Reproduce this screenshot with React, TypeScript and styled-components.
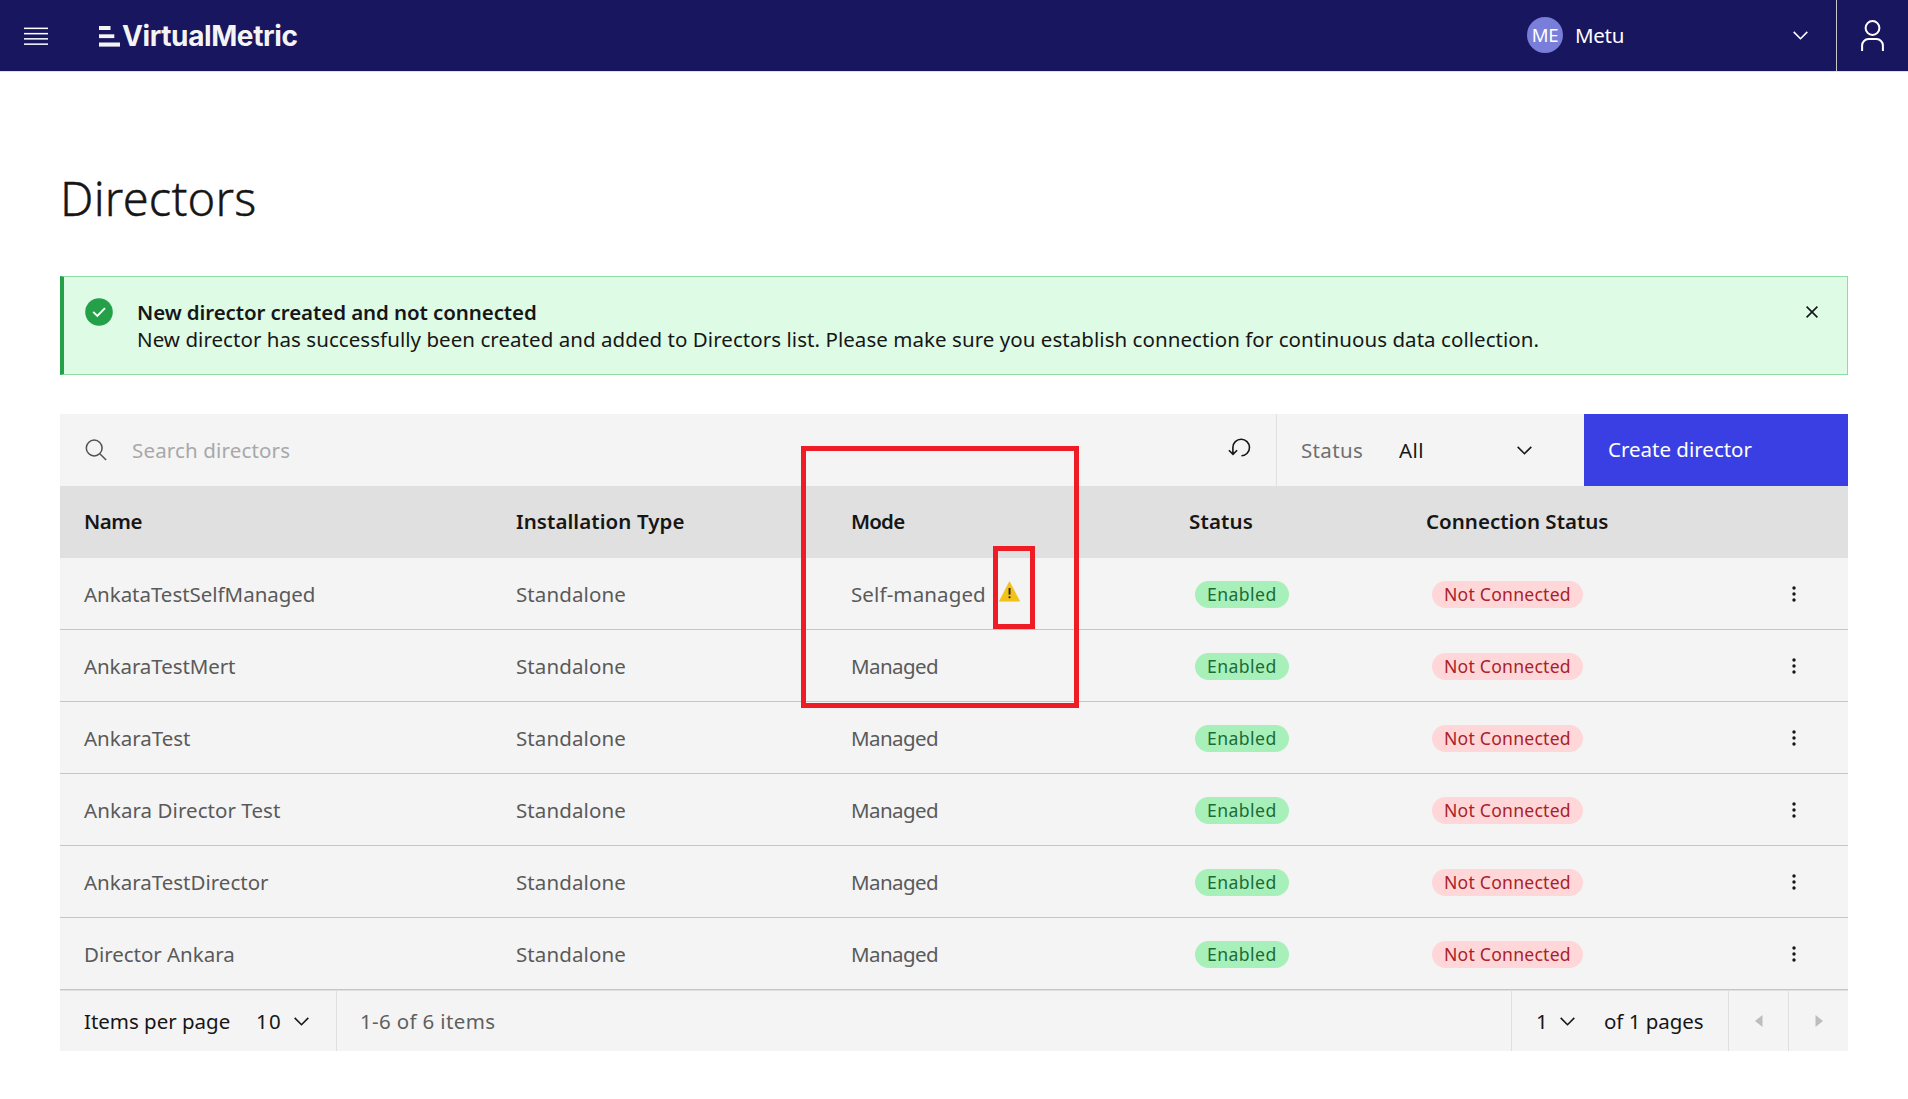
import React from "react";
import styled, { createGlobalStyle } from "styled-components";

const GlobalStyle = createGlobalStyle`
  *, *::before, *::after { box-sizing: border-box; }
  body {
    margin: 0;
    background: #ffffff;
    color: #161616;
    font-family: "Noto Sans", "Open Sans", sans-serif;
    font-size: 20.5px;
    line-height: 27px;
    overflow: hidden;
  }
  svg { display: block; flex: none; }
`;

const Page = styled.div`
  position: relative;
  width: 1908px;
  height: 1099px;
`;

const Text = styled.span<{ $ls?: number }>`
  letter-spacing: ${(p) => p.$ls ?? 0}px;
  white-space: nowrap;
`;

/* ---------- Top bar ---------- */

const TopBar = styled.header`
  display: flex;
  align-items: stretch;
  height: 72px;
  background: #191660;
  border-bottom: 1px solid #e0e0e0;
  color: #ffffff;
`;

const MenuButton = styled.div`
  display: flex;
  align-items: center;
  padding: 2px 51px 0 24px;
`;

const Logo = styled.div`
  display: flex;
  align-items: center;
  flex: 1;
  gap: 2px;
  padding-top: 1px;
  color: #f4f4f4;
  font-family: Inter, sans-serif;
  font-size: 28px;
  font-weight: 700;
  line-height: 34px;
`;

const Tenant = styled.div`
  display: flex;
  align-items: center;
  width: 309px;
  padding-right: 28px;
`;

const Avatar = styled.span`
  display: flex;
  align-items: center;
  justify-content: center;
  width: 36px;
  height: 36px;
  margin: 0 12px 1px 0;
  padding-bottom: 2px;
  border-radius: 50%;
  background: #7a7edb;
  font-size: 18.5px;
`;

const TenantName = styled.span`
  flex: 1;
  letter-spacing: -0.28px;
`;

const UserButton = styled.div`
  display: flex;
  align-items: center;
  width: 72px;
  padding-left: 24px;
  border-left: 1px solid #c6c6c6;
`;

/* ---------- Content ---------- */

const Content = styled.main`
  padding: 96px 60px 0;
`;

const Title = styled.h1`
  margin: 0 0 48px;
  font-size: 47px;
  font-weight: 300;
  line-height: 60px;
  letter-spacing: 0.23px;
  -webkit-text-stroke: 0.4px currentColor;
`;

const Banner = styled.section`
  display: flex;
  align-items: flex-start;
  height: 99px;
  margin-bottom: 39px;
  padding: 21px 29px 0 21px;
  border: 1px solid #8fdca5;
  border-left: 4px solid #24a148;
  background: #defbe6;
`;

const BannerBody = styled.div`
  display: flex;
  flex: 1;
  flex-direction: column;
  padding: 1px 0 0 24px;
`;

const BannerTitle = styled(Text)`
  font-weight: 600;
`;

const CloseButton = styled.div`
  padding-top: 8px;
`;

const Toolbar = styled.div`
  display: flex;
  height: 72px;
  background: #f4f4f4;
`;

const Search = styled.div`
  display: flex;
  flex: 1;
  align-items: center;
  padding-left: 25px;
  color: #a8a8a8;
`;

const SearchText = styled(Text)`
  flex: 1;
  padding-left: 25px;
`;

const RefreshButton = styled.div`
  padding: 0 25px 4px 0;
`;

const Filter = styled.div`
  display: flex;
  align-items: center;
  width: 308px;
  padding: 0 52px 0 24px;
  border-left: 1px solid #e0e0e0;
`;

const FilterLabel = styled(Text)`
  width: 98px;
  color: #6f6f6f;
`;

const FilterValue = styled(Text)`
  flex: 1;
`;

const CreateButton = styled.div`
  display: flex;
  align-items: center;
  width: 264px;
  padding: 0 24px 2px 24px;
  background: #393fe3;
  color: #ffffff;
`;

/* ---------- Table ---------- */

const Row = styled.div<{ $head?: boolean }>`
  display: grid;
  grid-template-columns: 432px 335px 338px 237px 1fr 94px;
  align-items: center;
  height: 72px;
  background: ${(p) => (p.$head ? "#e0e0e0" : "#f4f4f4")};
  border-bottom: ${(p) => (p.$head ? "0" : "1px solid #c6c6c6")};
  color: ${(p) => (p.$head ? "#161616" : "#5a5a5a")};
  font-weight: ${(p) => (p.$head ? 600 : 400)};
  padding: ${(p) => (p.$head ? "0 0 2px" : "1px 0 0")};
`;

const Cell = styled.div`
  display: flex;
  align-items: center;
  padding-left: 24px;
`;

const WarningMark = styled.span`
  padding: 0 0 5px 13px;
`;

const Tag = styled.span<{ $tone: "green" | "red" }>`
  height: 27px;
  margin-left: 6px;
  padding: 0 12px;
  border-radius: 14px;
  background: ${(p) => (p.$tone === "green" ? "#a7f0ba" : "#ffd7d9")};
  color: ${(p) => (p.$tone === "green" ? "#1b6b35" : "#a92229")};
  font-size: 17.6px;
  line-height: 26px;
  letter-spacing: ${(p) => (p.$tone === "green" ? 0.43 : 0.23)}px;
  white-space: nowrap;
`;

const RowMenu = styled.div`
  padding-left: 36px;
`;

/* ---------- Pagination ---------- */

const Pagination = styled.footer`
  display: flex;
  height: 61px;
  border-top: 1px solid #e0e0e0;
  background: #f4f4f4;
`;

const PageSize = styled.div`
  display: flex;
  align-items: center;
  width: 277px;
  padding-left: 24px;
  border-right: 1px solid #e0e0e0;
`;

const SizeLabel = styled(Text)`
  width: 172px;
`;

const SizeValue = styled(Text)`
  width: 38px;
`;

const Range = styled.div`
  display: flex;
  flex: 1;
  align-items: center;
  padding-left: 23px;
  color: #5f5f5f;
`;

const PageSelect = styled.div`
  display: flex;
  align-items: center;
  width: 217px;
  padding-left: 24px;
  border-left: 1px solid #e0e0e0;
`;

const PageValue = styled(Text)`
  width: 24px;
`;

const PageCount = styled(Text)`
  padding-left: 29px;
`;

const PageArrow = styled.div`
  display: flex;
  align-items: center;
  justify-content: center;
  width: 60px;
  border-left: 1px solid #e0e0e0;
`;

/* ---------- Highlight frames laid over the table ---------- */

const Frame = styled.div<{ $x: number; $y: number; $w: number; $h: number }>`
  position: absolute;
  left: ${(p) => p.$x}px;
  top: ${(p) => p.$y}px;
  width: ${(p) => p.$w}px;
  height: ${(p) => p.$h}px;
  border: 5px solid #ee1c24;
`;

const Chevron = () => (
  <svg width="15" height="9" viewBox="0 0 15 9" fill="none" stroke="currentColor" strokeWidth="1.6">
    <path d="M0.7 0.9 7.5 7.7 14.3 0.9" />
  </svg>
);

const rows = [
  { name: "AnkataTestSelfManaged", ls: -0.03, self: true },
  { name: "AnkaraTestMert", ls: -0.08 },
  { name: "AnkaraTest", ls: 0 },
  { name: "Ankara Director Test", ls: 0.06 },
  { name: "AnkaraTestDirector", ls: 0 },
  { name: "Director Ankara", ls: -0.03 },
];

export default function App() {
  return (
    <Page>
      <GlobalStyle />
      <TopBar>
        <MenuButton>
          <svg width="24" height="20" viewBox="0 0 24 20" fill="#ffffff">
            <rect y="0.6" width="24" height="1.5" />
            <rect y="5.9" width="24" height="1.5" />
            <rect y="11.1" width="24" height="1.5" />
            <rect y="16.4" width="24" height="1.5" />
          </svg>
        </MenuButton>
        <Logo>
          <svg width="21" height="21" viewBox="0 0 21 21" fill="#f4f4f4">
            <rect y="0" width="11.5" height="4" />
            <rect y="8.3" width="15.3" height="3.8" />
            <rect y="16.5" width="21" height="4.1" />
          </svg>
          <Text $ls={-0.4}>VirtualMetric</Text>
        </Logo>
        <Tenant>
          <Avatar>
            <Text $ls={-0.4}>ME</Text>
          </Avatar>
          <TenantName>Metu</TenantName>
          <Chevron />
        </Tenant>
        <UserButton>
          <svg width="23" height="32" viewBox="0 0 23 32" fill="none" stroke="#ffffff" strokeWidth="2">
            <circle cx="11.5" cy="8" r="6.9" />
            <path d="M1.1 31v-5.5a6.4 6.4 0 0 1 6.4-6.4h8a6.4 6.4 0 0 1 6.4 6.4V31" />
          </svg>
        </UserButton>
      </TopBar>

      <Content>
        <Title>Directors</Title>

        <Banner>
          <svg width="28" height="28" viewBox="0 0 28 28">
            <circle cx="14" cy="14" r="13.8" fill="#24a148" />
            <path d="M8.2 13.8 12.3 17.9 20 10.1" fill="none" stroke="#ffffff" strokeWidth="1.9" />
          </svg>
          <BannerBody>
            <BannerTitle $ls={-0.09}>New director created and not connected</BannerTitle>
            <Text $ls={0.052}>
              New director has successfully been created and added to Directors list. Please make sure you establish
              connection for continuous data collection.
            </Text>
          </BannerBody>
          <CloseButton>
            <svg width="12" height="12" viewBox="0 0 12 12" fill="none" stroke="#161616" strokeWidth="1.6">
              <path d="M0.6 0.6 11.4 11.4M11.4 0.6 0.6 11.4" />
            </svg>
          </CloseButton>
        </Banner>

        <Toolbar>
          <Search>
            <svg width="22" height="22" viewBox="0 0 22 22" fill="none" stroke="#525252" strokeWidth="1.5">
              <circle cx="9.2" cy="9" r="7.9" />
              <path d="M14.8 14.7 21.1 21" />
            </svg>
            <SearchText $ls={0.16}>Search directors</SearchText>
            <RefreshButton>
              <svg width="23" height="20" viewBox="0 0 23 20" fill="none" stroke="#161616" strokeWidth="1.6">
                <path d="M13.4 17.8a8.3 8.3 0 1 0-8.5-8.3v6.6M0.9 12.3 5 16.3 9.1 12.3" />
              </svg>
            </RefreshButton>
          </Search>
          <Filter>
            <FilterLabel $ls={0.36}>Status</FilterLabel>
            <FilterValue $ls={0.4}>All</FilterValue>
            <Chevron />
          </Filter>
          <CreateButton>
            <Text>Create director</Text>
          </CreateButton>
        </Toolbar>

        <Row $head>
          <Cell><Text $ls={-0.5}>Name</Text></Cell>
          <Cell><Text $ls={0.08}>Installation Type</Text></Cell>
          <Cell><Text $ls={-0.8}>Mode</Text></Cell>
          <Cell><Text $ls={0.14}>Status</Text></Cell>
          <Cell><Text>Connection Status</Text></Cell>
        </Row>
        {rows.map((row) => (
          <Row key={row.name}>
            <Cell><Text $ls={row.ls}>{row.name}</Text></Cell>
            <Cell><Text $ls={0.1}>Standalone</Text></Cell>
            <Cell>
              <Text $ls={row.self ? 0.12 : -0.58}>{row.self ? "Self-managed" : "Managed"}</Text>
              {row.self && (
                <WarningMark>
                  <svg width="21" height="21" viewBox="0 0 21 21">
                    <path d="M10.5 0.6 20.7 20.2H0.3Z" fill="#f1c21b" stroke="#f1c21b" strokeWidth="0.6" strokeLinejoin="round" />
                    <rect x="9.6" y="7" width="1.9" height="6.6" fill="#2b2508" />
                    <rect x="9.5" y="15.2" width="2.1" height="2" rx="0.9" fill="#2b2508" />
                  </svg>
                </WarningMark>
              )}
            </Cell>
            <Cell><Tag $tone="green">Enabled</Tag></Cell>
            <Cell><Tag $tone="red">Not Connected</Tag></Cell>
            <RowMenu>
              <svg width="8" height="18" viewBox="0 0 8 18" fill="#161616">
                <circle cx="4" cy="3" r="1.7" />
                <circle cx="4" cy="9" r="1.7" />
                <circle cx="4" cy="15" r="1.7" />
              </svg>
            </RowMenu>
          </Row>
        ))}

        <Pagination>
          <PageSize>
            <SizeLabel $ls={-0.02}>Items per page</SizeLabel>
            <SizeValue $ls={1.3}>10</SizeValue>
            <Chevron />
          </PageSize>
          <Range>
            <Text $ls={0.35}>1-6 of 6 items</Text>
          </Range>
          <PageSelect>
            <PageValue>1</PageValue>
            <Chevron />
            <PageCount $ls={-0.04}>of 1 pages</PageCount>
          </PageSelect>
          <PageArrow>
            <svg width="8" height="12" viewBox="0 0 8 12" fill="#bdbdbd"><path d="M7.5 0V12L0 6Z" /></svg>
          </PageArrow>
          <PageArrow>
            <svg width="8" height="12" viewBox="0 0 8 12" fill="#bdbdbd"><path d="M0.5 0V12L8 6Z" /></svg>
          </PageArrow>
        </Pagination>
      </Content>

      <Frame $x={801} $y={446} $w={278} $h={262} />
      <Frame $x={993} $y={546} $w={42} $h={83} />
    </Page>
  );
}
